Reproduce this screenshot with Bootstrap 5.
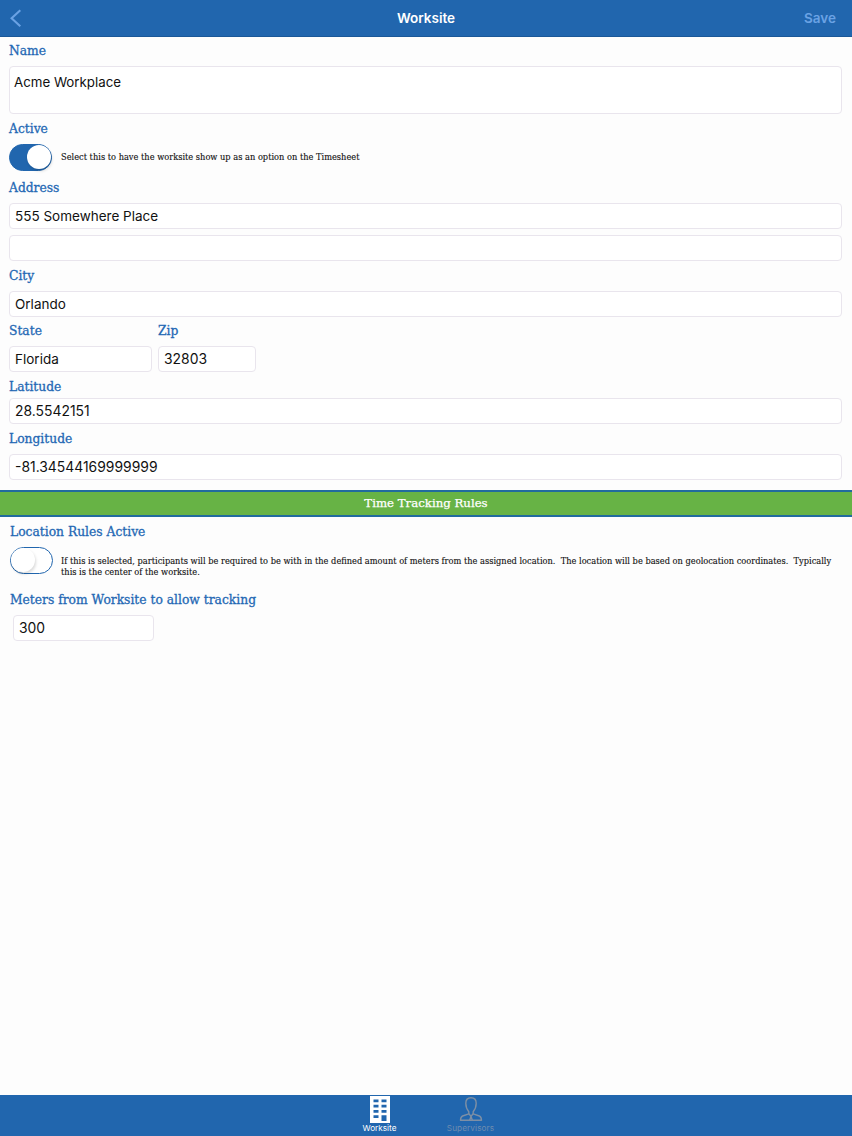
<!DOCTYPE html>
<html lang="en">
<head>
    <meta charset="UTF-8">
    <meta name="viewport" content="width=device-width, initial-scale=1">
    <title>Worksite</title>
    <!-- Bootstrap CSS -->
    <link href="https://cdn.jsdelivr.net/npm/bootstrap@5.3.2/dist/css/bootstrap.min.css" rel="stylesheet">

    <style>
        body {
            font-family: Inter, "Liberation Sans", sans-serif;
            background: #fdfdfd;
            color: #111;
        }
        .app-bar {
            height: 37px;
            background: #2166ae;
            border-bottom: 1px solid #1b5898;
            font-size: 13.5px;
        }
        .app-bar .bar-title {
            color: #fff;
            font-weight: 600;
        }
        .app-bar .bar-action {
            color: #6aa2e4;
            font-weight: 600;
        }
        .worksite-form {
            padding: 5px 10px 0 9px;
        }
        .slab-label {
            font: 12.3px/18px "DejaVu Serif", serif;
            color: #2468b4;
            -webkit-text-stroke: .3px #2468b4;
            margin-bottom: 6px;
            white-space: nowrap;
            display: block;
        }
        .slab-hint {
            font: 8.26px/11px "DejaVu Serif", serif;
            color: #111;
            -webkit-text-stroke: .12px #111;
            white-space: pre-line;
            margin-left: 9px;
        }
        .active-label {
            margin: 6px 0;
        }
        .street2,
        .city-label,
        .lng-label {
            margin-top: 6px;
        }
        .lat-label {
            margin: 6px 0 2px;
        }
        .worksite-form .form-control,
        .rules-form .form-control {
            height: 26px;
            padding: 0 5px 1px;
            border-color: #e9e5ed;
            border-radius: 4px;
            background: #fff;
            color: #111;
            font-size: 13.5px;
            line-height: 23px;
        }
        .worksite-form textarea.form-control {
            height: 48px;
            padding: 3px 4px;
            resize: none;
            line-height: 24px;
            font-size: 13.3px;
        }
        .worksite-form .digits,
        .rules-form .digits {
            font-size: 13.9px;
        }
        .ios-switch.form-check-input {
            width: 43px;
            height: 27px;
            margin: 0;
            border: 1.5px solid #2166ae;
            border-radius: 14px;
            background: #fff;
            position: relative;
            flex: none;
        }
        .ios-switch.form-check-input::after {
            content: "";
            position: absolute;
            top: 0;
            left: 0;
            width: 24px;
            height: 24px;
            border-radius: 50%;
            background: #fff;
            box-shadow: 1px 2px 3px rgba(0, 0, 0, .15);
        }
        .ios-switch.form-check-input:checked {
            background: #2166ae;
        }
        .ios-switch.form-check-input:checked::after {
            left: auto;
            right: 0;
        }
        .state-row {
            gap: 6px;
            margin-top: 5px;
        }
        .state-col {
            width: 143px;
        }
        .zip-col {
            width: 98px;
        }
        .rules-band {
            height: 27px;
            margin-top: 10px;
            background: #67b345;
            border-top: 2px solid #216b9e;
            border-bottom: 2px solid #216b9e;
            color: #fff;
            font: 11.75px/23px "DejaVu Serif", serif;
            -webkit-text-stroke: .25px #fff;
        }
        .rules-form {
            padding: 6px 10px 0 10px;
        }
        .rules-form .slab-hint {
            margin-left: 8px;
            margin-top: 9px;
        }
        .meters-label {
            margin-top: 13px;
        }
        .meters-input {
            width: 141px;
            margin-left: 3px;
        }
        .tab-strip {
            height: 41px;
            padding-right: 2px;
            background: #2166ae;
            font-size: 8.2px;
            line-height: 11px;
        }
        .tab-strip a {
            width: 91px;
            color: #fff;
            text-decoration: none;
        }
        .tab-strip a.idle {
            color: #6e8cae;
            letter-spacing: .1px;
        }
    </style>
</head>
<body class="d-flex flex-column vh-100 overflow-hidden">
    <!-- Top bar -->
    <nav class="app-bar d-flex align-items-center flex-shrink-0 px-2">
        <div class="col">
            <svg class="d-block" width="16" height="20" viewBox="0 0 16 20" fill="none" stroke="#6aa2e4" stroke-width="2.1"><path d="M12.3 2.3 3.6 10.3l8.7 8"/></svg>
        </div>
        <div class="bar-title">Worksite</div>
        <div class="col text-end"><span class="bar-action me-2">Save</span></div>
    </nav>

    <!-- Worksite details -->
    <form class="worksite-form">
        <label class="slab-label" for="name">Name</label>
        <textarea class="form-control" id="name">Acme Workplace</textarea>

        <label class="slab-label active-label" for="active">Active</label>
        <div class="d-flex align-items-center">
            <input class="form-check-input ios-switch" type="checkbox" id="active" checked>
            <span class="slab-hint">Select this to have the worksite show up as an option on the Timesheet</span>
        </div>

        <label class="slab-label mt-2" for="street1">Address</label>
        <input class="form-control" id="street1" value="555 Somewhere Place">
        <input class="form-control street2" id="street2">

        <label class="slab-label city-label" for="city">City</label>
        <input class="form-control" id="city" value="Orlando">

        <div class="d-flex state-row">
            <div class="state-col">
                <label class="slab-label" for="state">State</label>
                <input class="form-control" id="state" value="Florida">
            </div>
            <div class="zip-col">
                <label class="slab-label" for="zip">Zip</label>
                <input class="form-control digits" id="zip" value="32803">
            </div>
        </div>

        <label class="slab-label lat-label" for="lat">Latitude</label>
        <input class="form-control digits" id="lat" value="28.5542151">

        <label class="slab-label lng-label" for="lng">Longitude</label>
        <input class="form-control digits" id="lng" value="-81.34544169999999">
    </form>

    <!-- Time tracking rules -->
    <div class="rules-band text-center flex-shrink-0">Time Tracking Rules</div>
    <form class="rules-form flex-grow-1">
        <label class="slab-label" for="rules">Location Rules Active</label>
        <div class="d-flex">
            <input class="form-check-input ios-switch" type="checkbox" id="rules">
            <span class="slab-hint">If this is selected, participants will be required to be with in the defined amount of meters from the assigned location.&nbsp; The location will be based on geolocation coordinates.&nbsp; Typically
                this is the center of the worksite.</span>
        </div>
        <label class="slab-label meters-label" for="meters">Meters from Worksite to allow tracking</label>
        <input class="form-control digits meters-input" id="meters" value="300">
    </form>

    <!-- Bottom tabs -->
    <nav class="tab-strip d-flex justify-content-center flex-shrink-0">
        <a href="#" class="d-flex flex-column align-items-center">
            <svg width="22" height="28" viewBox="0 0 22 28">
                <path fill="#fff" d="M1 1h20v27H1z"/>
                <path fill="#2166ae" d="M4.500 4.500h5v2.800h-5zM12.500 4.500h5v2.800h-5zM4.500 9.800h5v2.800h-5zM12.500 9.800h5v2.800h-5zM4.500 15h5v2.800h-5zM12.500 15h5v2.800h-5zM4.500 20.300h5v2.800h-5zM12.500 20.300h5V26h-5z"/>
            </svg>
            <span>Worksite</span>
        </a>
        <a href="#" class="idle d-flex flex-column align-items-center">
            <svg width="24" height="28" viewBox="0 0 24 28" fill="none" stroke="#7d8fa5" stroke-width="1.4" stroke-linejoin="round">
                <path d="M12 2.700c-3.300 0-5.200 2.300-5.200 5.600 0 3.700 1.500 6.600 3 8.400v2.100L3.600 21c-1.500.6-2 2.200-2.100 4.300h21c-.1-2.100-.6-3.700-2.100-4.300l-6.200-2.200v-2.100c1.500-1.800 3-4.700 3-8.400 0-3.300-1.900-5.600-5.200-5.600z"/>
                <path d="M9.800 18.800l2.200 2.400 2.200-2.400M12 21.200l-1.300 4M12 21.200l1.300 4"/>
            </svg>
            <span>Supervisors</span>
        </a>
    </nav>

    <!-- Bootstrap JS -->
    <script src="https://cdn.jsdelivr.net/npm/bootstrap@5.3.2/dist/js/bootstrap.bundle.min.js"></script>
</body>
</html>
